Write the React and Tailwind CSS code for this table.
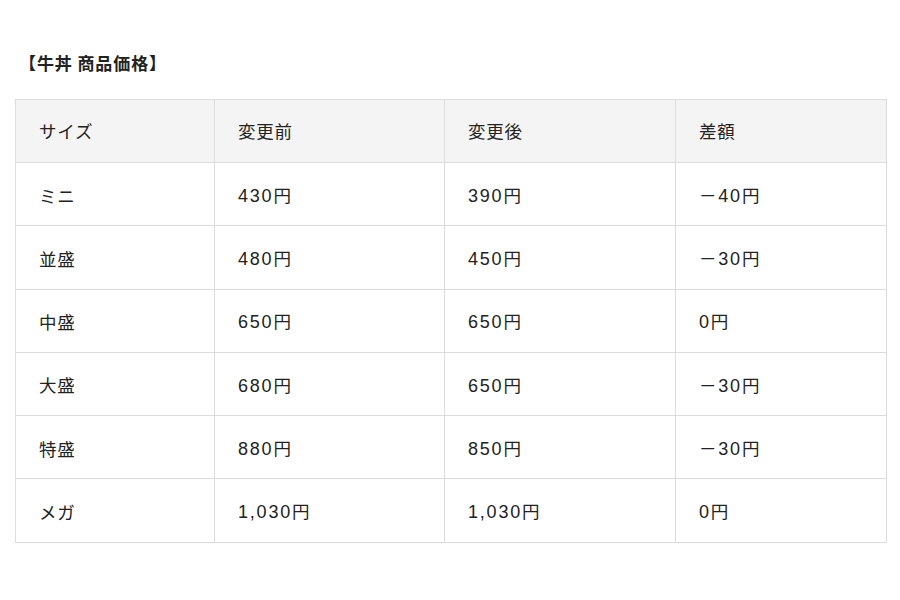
import React from "react";

const rows = [
  ["ミニ", "430", "390", "－40"],
  ["並盛", "480", "450", "－30"],
  ["中盛", "650", "650", "0"],
  ["大盛", "680", "650", "－30"],
  ["特盛", "880", "850", "－30"],
  ["メガ", "1,030", "1,030", "0"],
];

function Price({ v }) {
  const neg = v.startsWith("－");
  const num = neg ? v.slice(1) : v;
  return (
    <span>
      {neg && <span className="mr-[1px]">－</span>}
      <span
        className="tracking-[1.8px] text-[18px]"
        style={{ fontFamily: '"Liberation Sans", Arial, sans-serif' }}
      >
        {num}
      </span>
      <span>円</span>
    </span>
  );
}

export default function App() {
  return (
    <div
      className="w-[900px] h-[600px] bg-white text-[#222]"
      style={{ fontFamily: '"Noto Sans CJK JP", "Noto Sans", sans-serif' }}
    >
      <div className="pl-[19px] pt-[50px] h-[99px]">
        <h1 className="text-[17px] font-bold leading-[26px] tracking-[0.9px]">【牛丼 商品価格】</h1>
      </div>
      <div className="pl-[15px]">
        <table className="table-fixed border-collapse w-[871px] text-[17.5px]">
          <colgroup>
            <col className="w-[199px]" />
            <col className="w-[230px]" />
            <col className="w-[231px]" />
            <col className="w-[211px]" />
          </colgroup>
          <thead>
            <tr className="bg-[#f4f4f4] h-[63px]">
              {["サイズ", "変更前", "変更後", "差額"].map((h) => (
                <th key={h} className="border border-[#dcdcdc] text-left font-normal pl-[23px] pt-0 tracking-[0.8px]">
                  {h}
                </th>
              ))}
            </tr>
          </thead>
          <tbody>
            {rows.map((r, i) => (
              <tr key={i} className="h-[63.3px]">
                {r.map((c, j) => (
                  <td key={j} className="border border-[#dcdcdc] pl-[23px] pt-[3px] tracking-[0.8px]">
                    {j === 0 ? c : <Price v={c} />}
                  </td>
                ))}
              </tr>
            ))}
          </tbody>
        </table>
      </div>
    </div>
  );
}
